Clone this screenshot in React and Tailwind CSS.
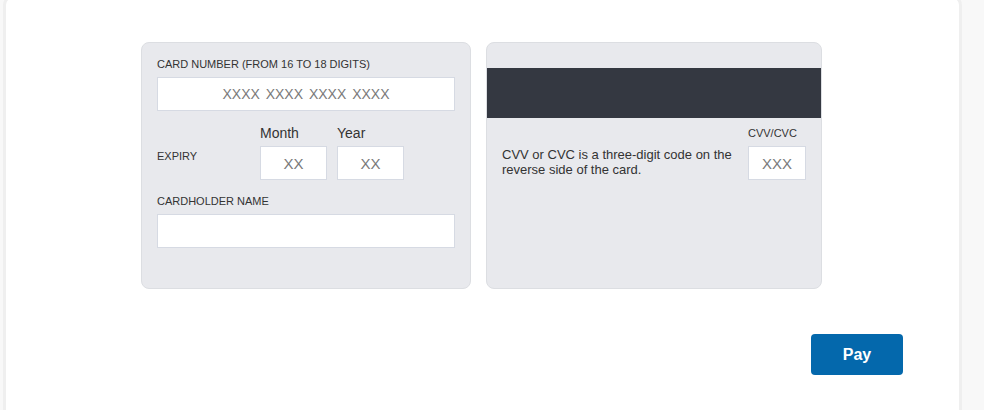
import React from 'react';

const Field = ({ placeholder, className = '' }) => (
    <input
        type="text"
        placeholder={placeholder}
        className={`h-[34px] bg-white border border-[#d6dae3] text-center text-[15px] text-[#333] placeholder:text-[#7a7a7a] outline-none ${className}`}
    />
);

const App = () => {
    return (
        <div className="h-[410px] bg-[#f8f8f8] overflow-hidden" style={{ fontFamily: '"Liberation Sans", Arial, sans-serif' }}>
            <div className="ml-[3px] mt-[-5px] w-[959px] h-[430px] bg-white border-[3px] border-[#efefef] rounded-[10px] pl-[135px] pt-[44px]">
                <div className="flex gap-[15px]">
                    {/* front of card */}
                    <div className="w-[330px] h-[247px] bg-[#e8e9ed] border border-[#dcdee2] rounded-lg px-[15px] pt-[14px]">
                        <div className="text-[11px] leading-[14px] text-[#333] uppercase">Card number (from 16 to 18 digits)</div>
                        <Field placeholder="XXXX XXXX XXXX XXXX" className="w-[298px] mt-[6px] !text-[14px] [word-spacing:2px]" />
                        <div className="flex mt-[14px]">
                            <div className="w-[103px] pt-[24px] text-[11px] leading-[14px] text-[#333]">EXPIRY</div>
                            <div className="flex flex-col">
                                <span className="text-[14px] leading-[16px] text-[#333]">Month</span>
                                <Field placeholder="XX" className="w-[67px] mt-[5px] text-[14px]" />
                            </div>
                            <div className="flex flex-col ml-[10px]">
                                <span className="text-[14px] leading-[16px] text-[#333]">Year</span>
                                <Field placeholder="XX" className="w-[67px] mt-[5px] text-[14px]" />
                            </div>
                        </div>
                        <div className="mt-[14px] text-[11px] leading-[14px] text-[#333]">CARDHOLDER NAME</div>
                        <Field className="w-[298px] mt-[6px]" />
                    </div>

                    {/* back of card */}
                    <div className="w-[336px] h-[247px] bg-[#e8e9ed] border border-[#dcdee2] rounded-lg pt-[25px]">
                        <div className="h-[50px] bg-[#343841]" />
                        <div className="flex items-end justify-between pl-[15px] pr-[15px] mt-[8px]">
                            <p className="w-[240px] text-[13px] leading-[15px] text-[#333] mb-[3px]">
                                CVV or CVC is a three-digit code on the reverse side of the card.
                            </p>
                            <div className="flex flex-col">
                                <span className="text-[11px] leading-[14px] text-[#333]">CVV/CVC</span>
                                <Field placeholder="XXX" className="w-[58px] mt-[6px] text-[14px]" />
                            </div>
                        </div>
                    </div>
                </div>

                <div className="flex justify-end pr-[56px] mt-[45px]">
                    <button className="w-[92px] h-[41px] bg-[#0468ac] rounded text-white font-bold text-[16px]">
                        Pay
                    </button>
                </div>
            </div>
        </div>
    );
};

export default App;
